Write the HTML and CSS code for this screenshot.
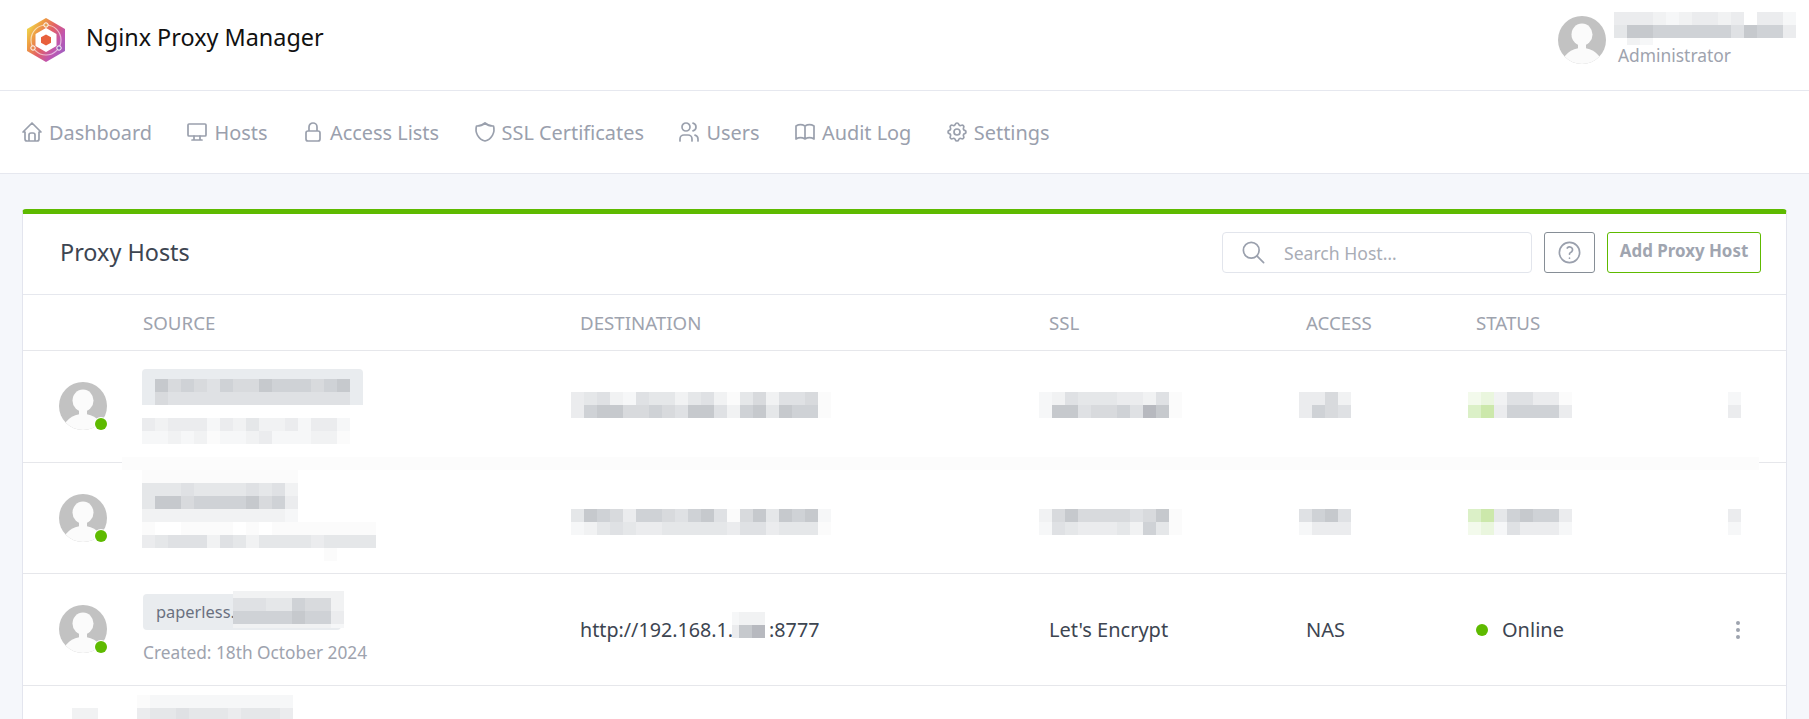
FILE: index.html
```html
<!DOCTYPE html>
<html lang="en">
<head>
<meta charset="utf-8">
<title>Nginx Proxy Manager</title>
<link rel="stylesheet" href="styles.css">
</head>
<body>
<svg class="defs" width="0" height="0" aria-hidden="true">
  <defs>
    <linearGradient id="hexfill" x1="0" y1="0.15" x2="1" y2="0.85">
      <stop offset="0" stop-color="#eee34e"/>
      <stop offset="0.25" stop-color="#ee9c42"/>
      <stop offset="0.5" stop-color="#e25f66"/>
      <stop offset="0.75" stop-color="#c055b0"/>
      <stop offset="1" stop-color="#9a62c4"/>
    </linearGradient>
    <clipPath id="avclip"><circle cx="24" cy="24" r="24"/></clipPath>
    <symbol id="avatar" viewBox="0 0 48 48">
      <circle cx="24" cy="24" r="24" fill="#c2c2c2"/>
      <g clip-path="url(#avclip)" fill="#fbfbfb">
        <ellipse cx="24" cy="18.5" rx="10.5" ry="11"/>
        <rect x="20" y="26" width="8" height="10"/>
        <ellipse cx="24" cy="49" rx="20" ry="17"/>
      </g>
    </symbol>
  </defs>
</svg>

<header class="topbar">
  <div class="brand">
    <svg class="logo" viewBox="0 0 40 46" width="40" height="46">
      <polygon points="20,1 39,12 39,34 20,45 1,34 1,12" fill="url(#hexfill)"/>
      <circle cx="20" cy="23" r="15" fill="none" stroke="#fff" stroke-opacity=".6" stroke-width="1.2"/>
      <circle cx="20" cy="8" r="2.2" fill="#e8a050" stroke="#fff" stroke-width="1"/>
      <circle cx="7" cy="31" r="2.2" fill="#e88a50" stroke="#fff" stroke-width="1"/>
      <circle cx="33" cy="31" r="2.2" fill="#8a5cb0" stroke="#fff" stroke-width="1"/>
      <polygon points="20,12 29.5,17.5 29.5,28.5 20,34 10.5,28.5 10.5,17.5" fill="#fff" stroke="#fff" stroke-width="2" stroke-linejoin="round"/>
      <polygon points="20,17.5 25,20.3 25,25.7 20,28.5 15,25.7 15,20.3" fill="#e8603c"/>
    </svg>
    <span class="brand-name">Nginx Proxy Manager</span>
  </div>
  <div class="user">
    <svg class="avatar-img" width="48" height="48"><use href="#avatar"/></svg>
    <div class="user-text">
      <div class="mosaic w14 user-blur">
        <i class="d"></i><i class="d"></i><i class="d"></i><i class="c"></i><i class="b"></i><i class="c"></i><i class="d"></i><i class="d"></i><i class="c"></i><i class="d"></i><i class="n"></i><i class="d"></i><i class="d"></i><i class="b"></i>
        <i class="e"></i><i class="i"></i><i class="i"></i><i class="h"></i><i class="h"></i><i class="h"></i><i class="h"></i><i class="h"></i><i class="h"></i><i class="f"></i><i class="i"></i><i class="h"></i><i class="h"></i><i class="d"></i>
        <i class="n"></i><i class="c"></i><i class="b"></i>
      </div>
      <div class="user-role">Administrator</div>
    </div>
  </div>
</header>

<nav class="navbar">
  <a class="nav-item"><svg class="ico" viewBox="0 0 24 24"><path d="M5 12H3l9-9 9 9h-2M5 12v7a2 2 0 0 0 2 2h10a2 2 0 0 0 2-2v-7M9 21v-6a2 2 0 0 1 2-2h2a2 2 0 0 1 2 2v6"/></svg>Dashboard</a>
  <a class="nav-item"><svg class="ico" viewBox="0 0 24 24"><rect x="3" y="4" width="18" height="12" rx="1"/><path d="M7 20h10M9 16v4M15 16v4"/></svg>Hosts</a>
  <a class="nav-item"><svg class="ico" viewBox="0 0 24 24"><path d="M5 13a2 2 0 0 1 2-2h10a2 2 0 0 1 2 2v6a2 2 0 0 1-2 2H7a2 2 0 0 1-2-2v-6zM8 11V7a4 4 0 1 1 8 0v4"/></svg>Access Lists</a>
  <a class="nav-item"><svg class="ico" viewBox="0 0 24 24"><path d="M12 3a12 12 0 0 0 8.5 3a12 12 0 0 1-8.5 15a12 12 0 0 1-8.5-15a12 12 0 0 0 8.5-3"/></svg>SSL Certificates</a>
  <a class="nav-item"><svg class="ico" viewBox="0 0 24 24"><path d="M5 7a4 4 0 1 0 8 0a4 4 0 1 0-8 0M3 21v-2a4 4 0 0 1 4-4h4a4 4 0 0 1 4 4v2M16 3.13a4 4 0 0 1 0 7.75M21 21v-2a4 4 0 0 0-3-3.85"/></svg>Users</a>
  <a class="nav-item"><svg class="ico" viewBox="0 0 24 24"><path d="M3 19a9 9 0 0 1 9 0a9 9 0 0 1 9 0M3 6a9 9 0 0 1 9 0a9 9 0 0 1 9 0M3 6v13M12 6v13M21 6v13"/></svg>Audit Log</a>
  <a class="nav-item"><svg class="ico" viewBox="0 0 24 24"><path d="M10.325 4.317c.426-1.756 2.924-1.756 3.35 0a1.724 1.724 0 0 0 2.573 1.066c1.543-.94 3.31.826 2.37 2.37a1.724 1.724 0 0 0 1.065 2.572c1.756.426 1.756 2.924 0 3.35a1.724 1.724 0 0 0-1.066 2.573c.94 1.543-.826 3.31-2.37 2.37a1.724 1.724 0 0 0-2.572 1.065c-.426 1.756-2.924 1.756-3.35 0a1.724 1.724 0 0 0-2.573-1.066c-1.543.94-3.31-.826-2.37-2.37a1.724 1.724 0 0 0-1.065-2.572c-1.756-.426-1.756-2.924 0-3.35a1.724 1.724 0 0 0 1.066-2.573c-.94-1.543.826-3.31 2.37-2.37c1 .608 2.296.07 2.572-1.065z"/><circle cx="12" cy="12" r="3"/></svg>Settings</a>
</nav>

<main class="page">
  <section class="card">
    <div class="card-head">
      <h1 class="card-title">Proxy Hosts</h1>
      <div class="tools">
        <label class="search">
          <svg class="ico ico-lg" viewBox="0 0 24 24"><circle cx="10" cy="10" r="7"/><path d="M21 21l-6-6"/></svg>
          <span class="placeholder">Search Host…</span>
        </label>
        <button class="btn-help"><svg class="ico ico-lg" viewBox="0 0 24 24"><circle cx="12" cy="12" r="9"/><path d="M12 17v.01M12 13.5a1.5 1.5 0 0 1 1-1.5a2.6 2.6 0 1 0-3-4"/></svg></button>
        <button class="btn-add">Add Proxy Host</button>
      </div>
    </div>

    <div class="grid-row thead">
      <div></div><div>SOURCE</div><div>DESTINATION</div><div>SSL</div><div>ACCESS</div><div>STATUS</div>
    </div>

    <div class="grid-row host row-a">
      <div class="av av-up"><svg width="48" height="48"><use href="#avatar"/></svg><span class="av-dot"></span></div>
      <div class="src">
        <div class="pill-blur">
          <div class="mosaic w15">
            <i class="i"></i><i class="g"></i><i class="h"></i><i class="g"></i><i class="f"></i><i class="h"></i><i class="g"></i><i class="g"></i><i class="i"></i><i class="h"></i><i class="h"></i><i class="h"></i><i class="g"></i><i class="h"></i><i class="i"></i>
            <i class="g"></i><i class="f"></i><i class="f"></i><i class="f"></i><i class="f"></i><i class="f"></i><i class="f"></i><i class="f"></i><i class="f"></i><i class="f"></i><i class="f"></i><i class="f"></i><i class="f"></i><i class="f"></i><i class="f"></i>
          </div>
        </div>
        <div class="mosaic w16 sub-blur">
          <i class="d"></i><i class="c"></i><i class="d"></i><i class="d"></i><i class="d"></i><i class="b"></i><i class="d"></i><i class="c"></i><i class="e"></i><i class="c"></i><i class="c"></i><i class="d"></i><i class="b"></i><i class="d"></i><i class="d"></i><i class="b"></i>
          <i class="b"></i><i class="b"></i><i class="c"></i><i class="b"></i><i class="c"></i><i class="a"></i><i class="b"></i><i class="b"></i><i class="c"></i><i class="d"></i><i class="b"></i><i class="b"></i><i class="b"></i><i class="c"></i><i class="c"></i><i class="a"></i>
        </div>
      </div>
      <div class="mosaic w20 shift-dest">
        <i class="d"></i><i class="e"></i><i class="f"></i><i class="c"></i><i class="b"></i><i class="f"></i><i class="e"></i><i class="e"></i><i class="c"></i><i class="e"></i><i class="f"></i><i class="c"></i><i class="a"></i><i class="e"></i><i class="g"></i><i class="c"></i><i class="f"></i><i class="f"></i><i class="g"></i><i class="a"></i>
        <i class="d"></i><i class="h"></i><i class="i"></i><i class="i"></i><i class="g"></i><i class="g"></i><i class="h"></i><i class="g"></i><i class="f"></i><i class="i"></i><i class="i"></i><i class="f"></i><i class="c"></i><i class="h"></i><i class="i"></i><i class="e"></i><i class="i"></i><i class="h"></i><i class="h"></i><i class="a"></i>
      </div>
      <div class="mosaic w11 shift-ssl">
        <i class="b"></i><i class="c"></i><i class="f"></i><i class="e"></i><i class="e"></i><i class="e"></i><i class="d"></i><i class="d"></i><i class="c"></i><i class="f"></i><i class="a"></i>
        <i class="b"></i><i class="i"></i><i class="i"></i><i class="f"></i><i class="g"></i><i class="g"></i><i class="h"></i><i class="f"></i><i class="j"></i><i class="i"></i><i class="a"></i>
      </div>
      <div class="mosaic w4 shift-access">
        <i class="d"></i><i class="d"></i><i class="g"></i><i class="c"></i>
        <i class="d"></i><i class="h"></i><i class="g"></i><i class="f"></i>
      </div>
      <div class="mosaic w8 shift-status">
        <i class="k"></i><i class="l"></i><i class="c"></i><i class="f"></i><i class="f"></i><i class="d"></i><i class="d"></i><i class="a"></i>
        <i class="m"></i><i class="o"></i><i class="d"></i><i class="h"></i><i class="h"></i><i class="h"></i><i class="h"></i><i class="d"></i>
      </div>
      <div class="mosaic w1 shift-act"><i class="b"></i><i class="d"></i></div>
      <div class="band"></div>
    </div>

    <div class="grid-row host row-b">
      <div class="av"><svg width="48" height="48"><use href="#avatar"/></svg><span class="av-dot"></span></div>
      <div class="src src-b">
        <div class="mosaic w12">
          <i class="a"></i><i class="a"></i><i class="a"></i><i class="a"></i><i class="a"></i><i class="a"></i><i class="a"></i><i class="a"></i><i class="a"></i><i class="a"></i><i class="a"></i><i class="a"></i>
          <i class="e"></i><i class="e"></i><i class="e"></i><i class="f"></i><i class="e"></i><i class="e"></i><i class="e"></i><i class="e"></i><i class="f"></i><i class="e"></i><i class="f"></i><i class="c"></i>
          <i class="e"></i><i class="i"></i><i class="i"></i><i class="g"></i><i class="h"></i><i class="h"></i><i class="h"></i><i class="h"></i><i class="i"></i><i class="g"></i><i class="h"></i><i class="d"></i>
          <i class="c"></i><i class="c"></i><i class="c"></i><i class="c"></i><i class="c"></i><i class="c"></i><i class="c"></i><i class="c"></i><i class="c"></i><i class="c"></i><i class="c"></i><i class="b"></i>
        </div>
        <div class="mosaic w18">
          <i class="a"></i><i class="n"></i><i class="n"></i><i class="a"></i><i class="a"></i><i class="a"></i><i class="a"></i><i class="n"></i><i class="a"></i><i class="n"></i><i class="a"></i><i class="a"></i><i class="a"></i><i class="a"></i><i class="a"></i><i class="a"></i><i class="a"></i><i class="a"></i>
          <i class="d"></i><i class="e"></i><i class="f"></i><i class="f"></i><i class="f"></i><i class="c"></i><i class="f"></i><i class="e"></i><i class="c"></i><i class="e"></i><i class="e"></i><i class="e"></i><i class="e"></i><i class="d"></i><i class="e"></i><i class="e"></i><i class="e"></i><i class="e"></i>
          <i class="n"></i><i class="n"></i><i class="n"></i><i class="n"></i><i class="n"></i><i class="n"></i><i class="n"></i><i class="n"></i><i class="n"></i><i class="n"></i><i class="n"></i><i class="n"></i><i class="n"></i><i class="n"></i><i class="a"></i><i class="n"></i><i class="n"></i><i class="n"></i>
        </div>
      </div>
      <div class="mosaic w20 shift-dest">
        <i class="e"></i><i class="i"></i><i class="h"></i><i class="g"></i><i class="d"></i><i class="h"></i><i class="h"></i><i class="g"></i><i class="f"></i><i class="h"></i><i class="i"></i><i class="f"></i><i class="a"></i><i class="g"></i><i class="i"></i><i class="e"></i><i class="i"></i><i class="h"></i><i class="i"></i><i class="b"></i>
        <i class="b"></i><i class="c"></i><i class="e"></i><i class="f"></i><i class="e"></i><i class="d"></i><i class="d"></i><i class="e"></i><i class="e"></i><i class="e"></i><i class="e"></i><i class="e"></i><i class="d"></i><i class="f"></i><i class="f"></i><i class="d"></i><i class="e"></i><i class="e"></i><i class="e"></i><i class="a"></i>
      </div>
      <div class="mosaic w11 shift-ssl">
        <i class="c"></i><i class="g"></i><i class="i"></i><i class="g"></i><i class="g"></i><i class="g"></i><i class="g"></i><i class="f"></i><i class="g"></i><i class="i"></i><i class="a"></i>
        <i class="b"></i><i class="f"></i><i class="e"></i><i class="d"></i><i class="d"></i><i class="d"></i><i class="e"></i><i class="c"></i><i class="h"></i><i class="e"></i><i class="a"></i>
      </div>
      <div class="mosaic w4 shift-access">
        <i class="f"></i><i class="h"></i><i class="i"></i><i class="f"></i>
        <i class="b"></i><i class="d"></i><i class="d"></i><i class="d"></i>
      </div>
      <div class="mosaic w8 shift-status">
        <i class="m"></i><i class="o"></i><i class="e"></i><i class="h"></i><i class="i"></i><i class="h"></i><i class="h"></i><i class="d"></i>
        <i class="k"></i><i class="l"></i><i class="b"></i><i class="f"></i><i class="d"></i><i class="d"></i><i class="d"></i><i class="b"></i>
      </div>
      <div class="mosaic w1 shift-act"><i class="d"></i><i class="b"></i></div>
    </div>

    <div class="grid-row host row-c">
      <div class="av av-up"><svg width="48" height="48"><use href="#avatar"/></svg><span class="av-dot"></span></div>
      <div class="src src-c">
        <div class="pill">paperless.
          <div class="mosaic over">
            <i class="c"></i><i class="c"></i><i class="c"></i><i class="c"></i><i class="c"></i><i class="c"></i><i class="c"></i><i class="c"></i><i class="c"></i>
            <i class="f"></i><i class="f"></i><i class="f"></i><i class="e"></i><i class="e"></i><i class="h"></i><i class="g"></i><i class="g"></i><i class="c"></i>
            <i class="h"></i><i class="h"></i><i class="h"></i><i class="h"></i><i class="h"></i><i class="i"></i><i class="h"></i><i class="h"></i><i class="d"></i>
            <i class="c"></i><i class="c"></i><i class="c"></i><i class="c"></i><i class="c"></i><i class="c"></i><i class="c"></i><i class="c"></i><i class="b"></i>
          </div>
        </div>
        <div class="created">Created: 18th October 2024</div>
      </div>
      <div class="cell url"><span>http://192.168.1.</span>
        <div class="mosaic ip">
          <i class="b"></i><i class="c"></i><i class="c"></i>
          <i class="d"></i><i class="i"></i><i class="j"></i>
        </div><span>:8777</span></div>
      <div class="cell">Let's Encrypt</div>
      <div class="cell">NAS</div>
      <div class="cell status"><span class="dot"></span>Online</div>
      <div class="kebab"><span></span><span></span><span></span></div>
    </div>

    <div class="grid-row host row-d">
      <div class="mosaic w2 shift-d0"><i class="n"></i><i class="n"></i><i class="c"></i><i class="c"></i></div>
      <div class="mosaic w12 shift-d1">
        <i class="a"></i><i class="b"></i><i class="b"></i><i class="b"></i><i class="b"></i><i class="b"></i><i class="b"></i><i class="b"></i><i class="b"></i><i class="b"></i><i class="b"></i><i class="b"></i>
        <i class="d"></i><i class="e"></i><i class="e"></i><i class="f"></i><i class="e"></i><i class="e"></i><i class="e"></i><i class="d"></i><i class="e"></i><i class="e"></i><i class="e"></i><i class="d"></i>
      </div>
    </div>
  </section>
</main>
</body>
</html>
```

FILE: styles.css
```css
* { box-sizing: border-box; }
html, body {
  margin: 0;
  height: 719px;
  overflow: hidden;
}
body {
  background: #f5f7fb;
  font-family: "Noto Sans", "Open Sans", sans-serif;
  font-size: 20px;
  color: #3d4551;
}
.defs { position: absolute; }

.topbar {
  height: 91px;
  padding: 0 13px 0 26px;
  background: #fff;
  border-bottom: 1px solid #e6e8ef;
  display: flex;
  align-items: flex-start;
  justify-content: space-between;
}
.brand { display: flex; align-items: center; gap: 20px; padding-top: 17px; }
.logo { display: block; filter: blur(.6px); }
.brand-name { font-size: 23.4px; color: #111; margin-top: -6px; }
.user { display: flex; gap: 8px; padding-top: 12px; }
.avatar-img { margin-top: 4px; display: block; }
.user-blur { grid-template-rows: 13px 13px 7px; grid-auto-rows: auto; }
.user-role { font-size: 17.4px; line-height: 20px; color: #9ea3ae; margin: 0 0 0 4px; }

.mosaic { display: grid; grid-auto-rows: 13px; flex: none; }
.mosaic i { display: block; }
.w1 { grid-template-columns: repeat(1, 13px); width: 13px; }
.w2 { grid-template-columns: repeat(2, 13px); width: 26px; }
.w4 { grid-template-columns: repeat(4, 13px); width: 52px; }
.w8 { grid-template-columns: repeat(8, 13px); width: 104px; }
.w11 { grid-template-columns: repeat(11, 13px); width: 143px; }
.w12 { grid-template-columns: repeat(12, 13px); width: 156px; }
.w14 { grid-template-columns: repeat(14, 13px); width: 182px; }
.w15 { grid-template-columns: repeat(15, 13px); width: 195px; }
.w16 { grid-template-columns: repeat(16, 13px); width: 208px; }
.w18 { grid-template-columns: repeat(18, 13px); width: 234px; }
.w20 { grid-template-columns: repeat(20, 13px); width: 260px; }
.n { background: transparent; }
.a { background: #fbfbfb; }
.b { background: #f6f7f8; }
.c { background: #f1f2f3; }
.d { background: #ebecee; }
.e { background: #e5e7e9; }
.f { background: #dfe1e4; }
.g { background: #d8dadd; }
.h { background: #cfd2d6; }
.i { background: #c6c9cd; }
.j { background: #b7b9bf; }
.k { background: #f3faec; }
.l { background: #eaf6de; }
.m { background: #dbf0c7; }
.o { background: #cce8ab; }

.navbar {
  height: 83px;
  padding: 0 20px;
  background: #fff;
  border-bottom: 1px solid #e6e8ef;
  display: flex;
  align-items: center;
  gap: 33.5px;
}
.nav-item {
  display: flex;
  align-items: center;
  gap: 5px;
  color: #9aa0ad;
  font-size: 19.9px;
  white-space: nowrap;
}
.ico {
  width: 24px;
  height: 24px;
  flex: none;
  fill: none;
  stroke: #9aa0ad;
  stroke-width: 1.7;
  stroke-linecap: round;
  stroke-linejoin: round;
}
.ico-lg { width: 27px; height: 27px; stroke-width: 1.5; }

.page { padding: 35px 22px 0; }
.card {
  background: #fff;
  border: 1px solid #e3e5ee;
  border-top: 5px solid #5eba00;
  border-radius: 4px 4px 0 0;
}
.card-head {
  height: 81px;
  padding: 0 25px 4px 37px;
  border-bottom: 1px solid #e6e8ee;
  display: flex;
  align-items: center;
  justify-content: space-between;
}
.card-title { margin: 0; font-size: 23.4px; font-weight: 400; color: #3d4551; }
.tools { display: flex; gap: 12px; margin-top: 1px; }
.search {
  width: 310px;
  height: 41px;
  padding-left: 17px;
  border: 1px solid #e2e5ec;
  border-radius: 4px;
  display: flex;
  align-items: center;
  gap: 17px;
}
.placeholder { color: #a9adb6; font-size: 17.6px; }
.btn-help {
  width: 51px;
  height: 41px;
  padding: 0;
  background: #fff;
  border: 1px solid #868e96;
  border-radius: 3px;
  display: flex;
  align-items: center;
  justify-content: center;
}
.btn-add {
  width: 154px;
  height: 41px;
  padding: 0 0 5px;
  background: #fff;
  border: 1px solid #5eba00;
  border-radius: 3px;
  color: #a0a5b0;
  font: 700 16.9px "Noto Sans", sans-serif;
}

.grid-row {
  display: grid;
  grid-template-columns: 120px 437px 469px 257px 170px 252px 1fr;
  align-items: center;
  border-bottom: 1px solid #e6e7eb;
  position: relative;
}
.thead { height: 56px; color: #9ea3ae; font-size: 18.7px; }
.row-a { height: 112px; }
.row-b { height: 111px; }
.row-c { height: 112px; }
.row-d { height: 60px; border-bottom: 0; align-items: start; }

.av { position: relative; width: 48px; height: 48px; margin-left: 36px; }
.av-up { margin-top: -2px; }
.av svg { display: block; }
.av-dot {
  position: absolute;
  right: 0;
  bottom: 0;
  width: 12px;
  height: 12px;
  border-radius: 50%;
  background: #5eba00;
  box-shadow: 0 0 0 1px #fff;
}

.src { display: flex; flex-direction: column; }
.src-c { margin-top: -2px; }
.pill-blur {
  width: 221px;
  height: 36px;
  margin-left: -1px;
  padding: 10px 13px 0;
  background: #e9ecef;
  border-radius: 4px 4px 0 0;
}
.sub-blur { margin: 13px 0 0 -1px; }
.src-b { margin: -6px 0 0 -1px; }
.shift-dest { margin: -4px 0 0 -9px; }
.shift-ssl { margin: -4px 0 0 -10px; }
.shift-access { margin: -4px 0 0 -7px; }
.shift-status { margin: -4px 0 0 -8px; }
.shift-act { margin: -4px 0 0 0; }
.row-b .mosaic[class*="shift-"] { margin-top: 7px; }
.band {
  position: absolute;
  left: 99px;
  right: 27px;
  bottom: -8px;
  height: 13px;
  background: #fcfcfc;
}

.pill {
  position: relative;
  width: 198px;
  height: 36px;
  padding-left: 13px;
  background: #e9ecef;
  border-radius: 4px;
  color: #6a7180;
  font-size: 16.4px;
  line-height: 36px;
}
.over {
  position: absolute;
  left: 90px;
  top: -3px;
  grid-template-columns: 7px repeat(8, 13px);
  grid-template-rows: 7px 13px 13px 4px;
  grid-auto-rows: auto;
}
.created { margin-top: 11px; color: #9ea3ae; font-size: 17.3px; line-height: 23px; }
.cell { white-space: nowrap; }
.url { display: flex; align-items: center; font-size: 19.7px; }
.ip { grid-template-columns: 7px 13px 13px; margin: -10px 4px 0 -1px; }
.status { display: flex; align-items: center; }
.dot { width: 12px; height: 12px; border-radius: 50%; background: #5eba00; margin: 1px 14px 0 0; }
.kebab { display: flex; flex-direction: column; gap: 3px; width: 4px; margin-left: 8px; }
.kebab span { width: 4px; height: 4px; border-radius: 50%; background: #9ea3ae; }
.shift-d0 { grid-column: 1; margin: 9px 0 0 49px; }
.shift-d1 { grid-column: 2; margin: 9px 0 0 -6px; }
```
